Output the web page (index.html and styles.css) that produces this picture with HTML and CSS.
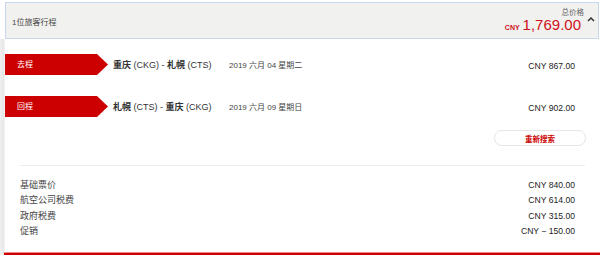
FILE: index.html
```html
<!DOCTYPE html>
<html lang="zh">
<head>
<meta charset="utf-8">
<link rel="stylesheet" href="styles.css">
</head>
<body>
<div class="page">
  <div class="header">
    <div class="pax">1位旅客行程</div>
    <div class="total">
      <div class="total-label">总价格</div>
      <div class="total-price"><span class="cur">CNY</span><span class="amt">1,769.00</span></div>
    </div>
    <svg class="caret" width="8" height="6" viewBox="0 0 8 6"><path d="M1 5 L4 2 L7 5" fill="none" stroke="#333" stroke-width="1.5"/></svg>
  </div>
  <div class="main">
    <div class="trip">
      <div class="tag">去程</div>
      <div class="route"><b>重庆</b> (CKG) - <b>札幌</b> (CTS)</div>
      <div class="date">2019 六月 04 星期二</div>
      <div class="price">CNY 867.00</div>
    </div>
    <div class="trip trip2">
      <div class="tag">回程</div>
      <div class="route"><b>札幌</b> (CTS) - <b>重庆</b> (CKG)</div>
      <div class="date">2019 六月 09 星期日</div>
      <div class="price">CNY 902.00</div>
    </div>
    <div class="actions"><button class="research">重新搜索</button></div>
    <div class="divider"></div>
    <div class="breakdown">
      <div class="line"><span>基础票价</span><span>CNY 840.00</span></div>
      <div class="line"><span>航空公司税费</span><span>CNY 614.00</span></div>
      <div class="line"><span>政府税费</span><span>CNY 315.00</span></div>
      <div class="line"><span>促销</span><span>CNY − 150.00</span></div>
    </div>
    <div class="redbar"></div>
  </div>
</div>
</body>
</html>
```

FILE: styles.css
```css
* { box-sizing: border-box; }
html, body { margin: 0; padding: 0; background: #fff; }
body {
  font-family: "Liberation Sans", Arial, "Noto Sans CJK SC", sans-serif;
  color: #333;
  width: 600px;
  height: 255px;
  overflow: hidden;
}
.page { padding-top: 2px; }
.header {
  margin-left: 5px;
  margin-right: 1px;
  height: 37px;
  background: #f1f1ef;
  border: 1px solid #c6d7ef;
  display: flex;
  align-items: center;
  padding-left: 6px;
  padding-right: 3px;
}
.pax { font-size: 8px; color: #444; flex: 1; padding-top: 1px; }
.total { display: flex; flex-direction: column; align-items: flex-end; margin-right: 6px; padding-top: 2px; }
.total-label { font-size: 7.5px; color: #666; line-height: 9px; margin-right: -3px; }
.total-price { display: flex; align-items: baseline; line-height: 16px; }
.cur { font-size: 7px; font-weight: bold; color: #d0101b; margin-right: 3px; }
.amt { font-size: 15px; color: #d0101b; }
.caret { margin-top: -3px; }
.main {
  height: 216px;
  background: linear-gradient(to right, #f0f0f0 0, #e6e6e6 4px, #fff 5px);
  padding-left: 5px;
  padding-top: 15px;
  position: relative;
}
.trip { display: flex; align-items: center; height: 21px; }
.trip2 { margin-top: 21px; }
.tag {
  width: 103px;
  height: 21px;
  background: #cc0000;
  color: #fff;
  font-size: 8px;
  line-height: 21px;
  padding-left: 12px;
  clip-path: polygon(0 0, 92px 0, 103px 50%, 92px 100%, 0 100%);
}
.route { margin-left: 5px; width: 116px; font-size: 9px; color: #333; }
.route b { font-weight: bold; color: #333; }
.date { font-size: 8px; color: #444; flex: 1; }
.price { font-size: 8.6px; color: #222; margin-right: 25px; padding-top: 2px; }
.actions { display: flex; justify-content: flex-end; margin-top: 13px; margin-right: 14px; }
.research {
  width: 92px;
  height: 16px;
  border: 1px solid #e6e6e6;
  border-radius: 8px;
  background: #fff;
  color: #cc0000;
  font-weight: bold;
  font-size: 7.5px;
  font-family: "Liberation Sans", "Noto Sans CJK SC", sans-serif;
  padding: 0;
}
.divider { margin: 19px 15px 0 15px; height: 1px; background: #ececec; }
.breakdown { margin: 12px 25px 0 15px; }
.line { display: flex; justify-content: space-between; font-size: 8.6px; line-height: 15.3px; color: #222; }
.line span:first-child { font-size: 9px; color: #444; }
.redbar {
  position: absolute;
  left: 4px; right: 0; bottom: 0;
  height: 3px;
  background: #cc0000;
  border-top: 1px solid #e88;
}
```
